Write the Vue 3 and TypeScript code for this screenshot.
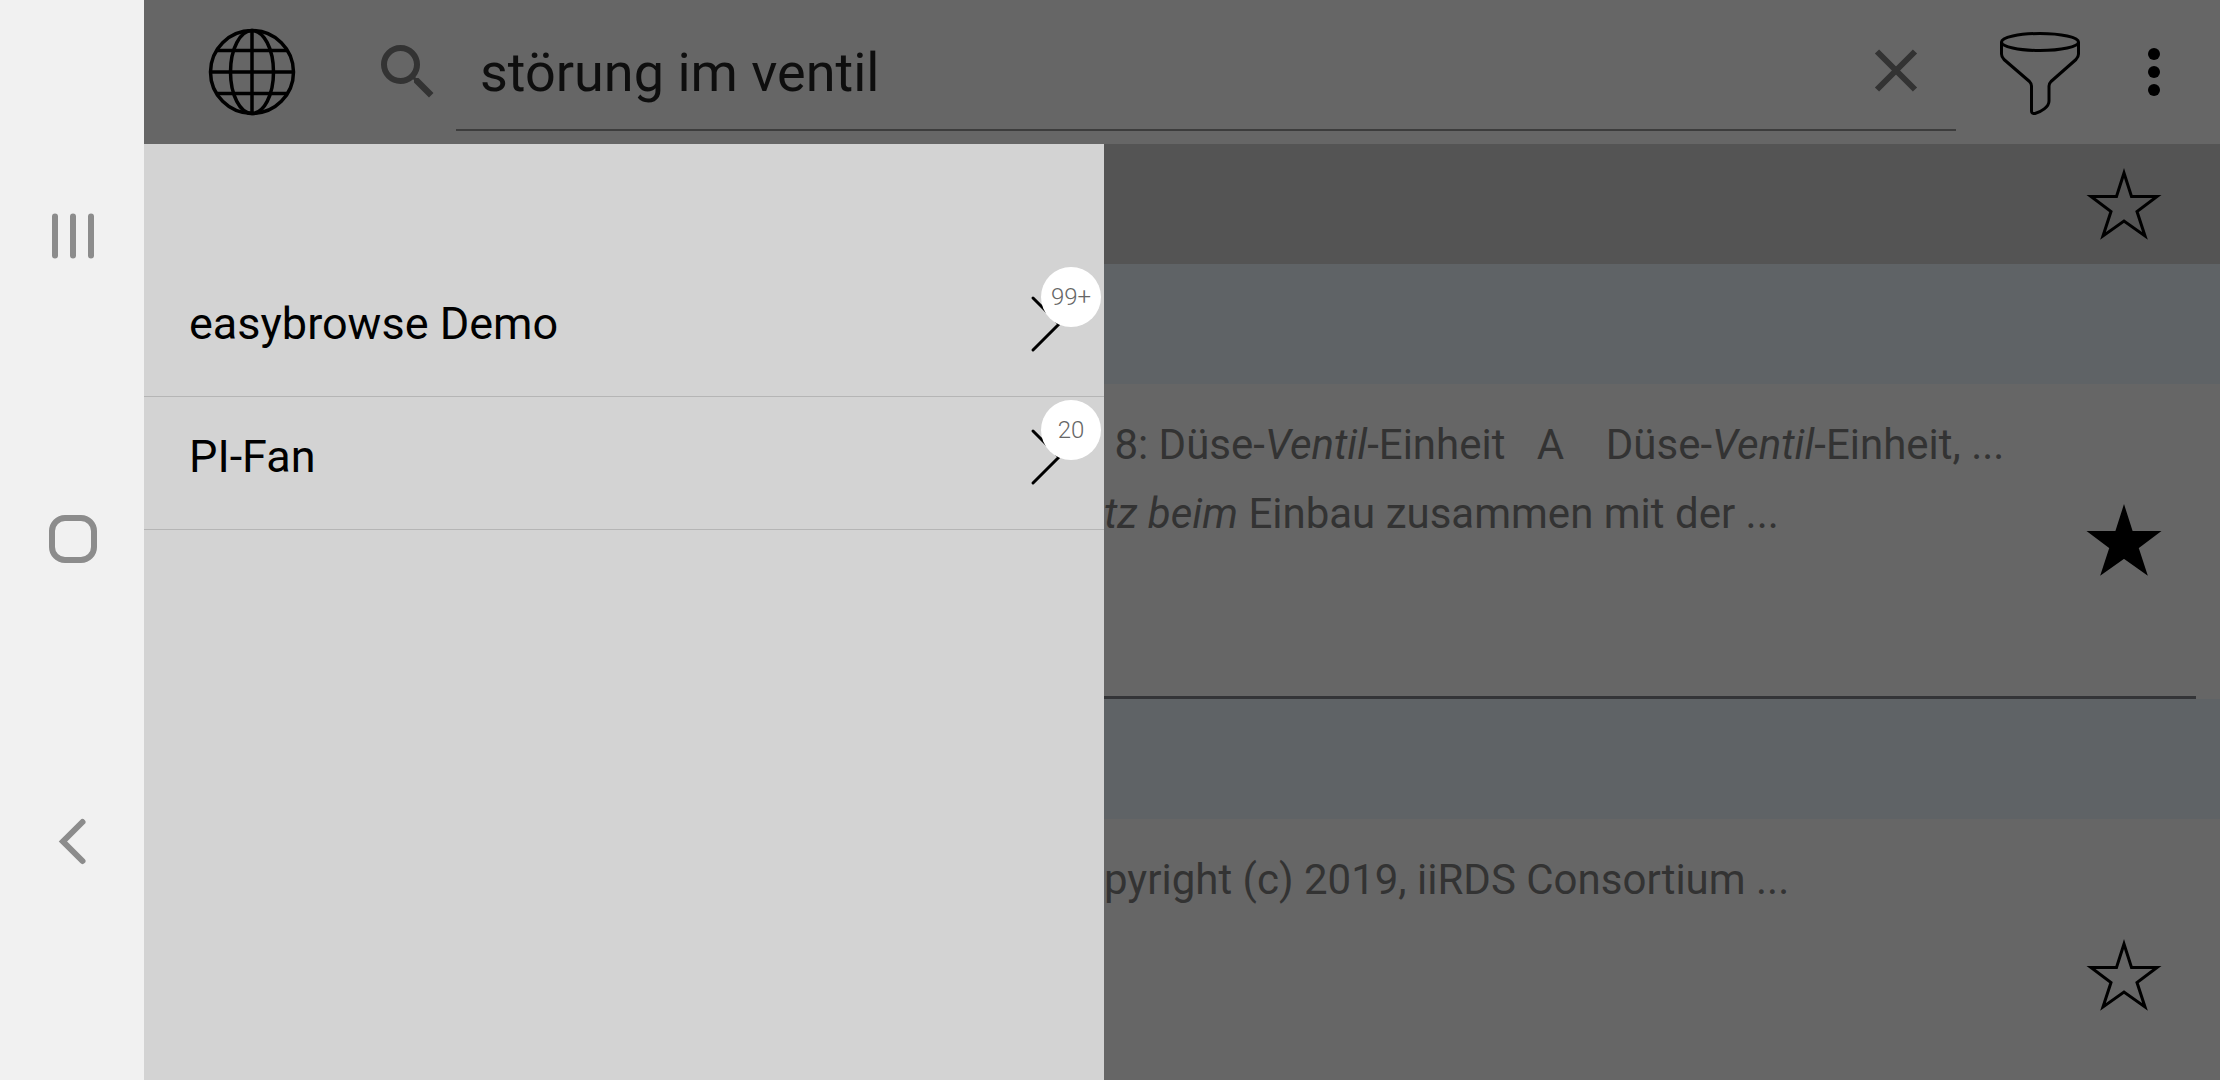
<script setup lang="ts">
import { ref } from 'vue'

interface Run {
  text: string
  em?: boolean
}

interface Result {
  id: number
  starred: boolean
  lines: Run[][]
}

interface Source {
  name: string
  badge: string
}

const query = ref('störung im ventil')

const sources: Source[] = [
  { name: 'easybrowse Demo', badge: '99+' },
  { name: 'PI-Fan', badge: '20' },
]

const results = ref<Result[]>([
  {
    id: 1,
    starred: true,
    lines: [
      [
        { text: ' 8: Düse-' },
        { text: 'Ventil', em: true },
        { text: '-Einheit   A    Düse-' },
        { text: 'Ventil', em: true },
        { text: '-Einheit, ...' },
      ],
      [{ text: 'tz beim', em: true }, { text: ' Einbau zusammen mit der ...' }],
    ],
  },
  {
    id: 2,
    starred: false,
    lines: [[{ text: 'pyright (c) 2019, iiRDS Consortium ...' }]],
  },
])

const star =
  'M40 9 47.500 32.500H73L53 47.500 61 72 40 57 19 72 27 47.500 7 32.500H32.500Z'
</script>

<template>
  <div class="screen">
    <nav class="system-nav" aria-label="System">
      <button type="button" aria-label="Recent apps">
        <svg viewBox="0 0 72 72" stroke-width="6" stroke-linecap="round">
          <path d="M19 16.500V55.500M37 16.500V55.500M55 16.500V55.500" />
        </svg>
      </button>
      <button type="button" aria-label="Home">
        <svg viewBox="0 0 72 72" stroke-width="6">
          <rect x="16" y="15" width="42" height="42" rx="13" />
        </svg>
      </button>
      <button type="button" aria-label="Back">
        <svg viewBox="0 0 72 72" stroke-width="6" stroke-linecap="round">
          <path d="M46.500 17 27 36.500 46.500 56" />
        </svg>
      </button>
    </nav>

    <div class="app">
      <header class="toolbar">
        <button type="button" class="icon-large" aria-label="Sources">
          <svg viewBox="0 0 96 96" stroke="#000" stroke-width="3.500">
            <circle cx="48" cy="48" r="41.500" />
            <ellipse cx="48" cy="48" rx="21.500" ry="41.500" />
            <path d="M48 6V90M6 48H90M13 26.500H83M13 69.500H83" />
          </svg>
        </button>
        <label class="search-label" for="query" aria-label="Search">
          <svg viewBox="0 0 24 24" fill="#333">
            <path
              d="M15.5 14h-.79l-.28-.27A6.471 6.471 0 0 0 16 9.500 6.500 6.500 0 1 0 9.500 16c1.610 0 3.090-.59 4.230-1.570l.27.280v.79l5 4.990L20.490 19l-4.990-5zm-6 0C7.010 14 5 11.990 5 9.500S7.010 5 9.500 5 14 7.010 14 9.500 11.990 14 9.500 14z"
            />
          </svg>
        </label>
        <div class="field">
          <input id="query" v-model="query" type="text" />
          <button type="button" class="icon" aria-label="Clear" @click="query = ''">
            <svg viewBox="0 0 72 72" stroke="#333" stroke-width="6">
              <path d="M17 15.500 55 53.500M55 15.500 17 53.500" />
            </svg>
          </button>
        </div>
        <button type="button" class="icon-large filter" aria-label="Filter">
          <svg viewBox="0 0 96 96" stroke="#000" stroke-width="3" stroke-linejoin="round">
            <ellipse cx="48" cy="18" rx="38.500" ry="8.500" />
            <path
              d="M9.500 18V30Q9.500 33 12 35.500L37.500 57.500Q39.500 59.500 39.500 62V87Q39.500 90 43 89.500C49 88 57 83 57 77V62Q57 59.500 59 57.500L84 35.500Q86.500 33 86.500 30V18"
            />
          </svg>
        </button>
        <button type="button" class="more" aria-label="More options">
          <svg viewBox="0 0 36 72" fill="#000">
            <circle cx="18" cy="18" r="6" />
            <circle cx="18" cy="36" r="6" />
            <circle cx="18" cy="54" r="6" />
          </svg>
        </button>
      </header>

      <div class="body">
        <main class="content">
          <div class="title-bar">
            <button type="button" class="star" aria-label="Add search to favourites">
              <svg viewBox="0 0 80 80" stroke="#000" stroke-width="3"><path :d="star" /></svg>
            </button>
          </div>
          <article v-for="result in results" :key="result.id" class="result">
            <div class="result-head"></div>
            <div class="result-body">
              <div class="excerpt">
                <p v-for="(line, i) in result.lines" :key="i">
                  <template v-for="(run, j) in line" :key="j"
                    ><em v-if="run.em">{{ run.text }}</em
                    ><span v-else>{{ run.text }}</span></template
                  >
                </p>
              </div>
              <button
                type="button"
                class="star"
                :aria-label="result.starred ? 'Remove favourite' : 'Add favourite'"
                :aria-pressed="result.starred"
                @click="result.starred = !result.starred"
              >
                <svg viewBox="0 0 80 80" stroke="#000" stroke-width="3">
                  <path :d="star" :fill="result.starred ? '#000' : 'none'" />
                </svg>
              </button>
            </div>
          </article>
        </main>

        <aside class="drawer">
          <ul>
            <li v-for="source in sources" :key="source.name">
              <button type="button" class="source">
                <span class="name">{{ source.name }}</span>
                <span class="count">
                  <svg viewBox="0 0 72 72" stroke="#000" stroke-width="3" stroke-linecap="round">
                    <path d="M4 11 30 37 4 63" />
                  </svg>
                  <span class="badge">{{ source.badge }}</span>
                </span>
              </button>
            </li>
          </ul>
        </aside>
      </div>
    </div>
  </div>
</template>

<style>
body {
  margin: 0;
  background: #666;
}
</style>

<style scoped>
.screen {
  display: flex;
  height: 100vh;
  overflow: hidden;
  font-family: Roboto, 'Liberation Sans', sans-serif;
}

button {
  display: block;
  flex: none;
  margin: 0;
  padding: 0;
  border: 0;
  background: none;
  color: inherit;
  font: inherit;
  cursor: pointer;
}

svg {
  display: block;
  width: 100%;
  height: 100%;
}

svg:not([fill]) {
  fill: none;
}

.system-nav {
  display: flex;
  flex: none;
  flex-direction: column;
  align-items: center;
  justify-content: space-between;
  box-sizing: border-box;
  width: 144px;
  padding: 200px 0 203px;
  background: #f1f1f1;
}

.system-nav button {
  width: 72px;
  height: 72px;
}

.system-nav svg {
  stroke: #8c8c8c;
}

.app {
  display: flex;
  flex: 1;
  flex-direction: column;
  min-width: 0;
  background: #666;
}

.toolbar {
  display: flex;
  flex: none;
  align-items: center;
  box-sizing: border-box;
  height: 144px;
  padding: 0 48px 0 60px;
}

.icon-large {
  width: 96px;
  height: 96px;
}

.icon,
.search-label {
  flex: none;
  width: 72px;
  height: 72px;
}

.search-label {
  margin: 0 12px 0 72px;
}

.field {
  display: flex;
  flex: 1;
  align-items: center;
  box-sizing: border-box;
  min-width: 0;
  height: 118px;
  padding: 0 24px;
  border-top: 2px solid transparent;
  border-bottom: 2px solid #3c3c3c;
}

.field input {
  flex: 1;
  min-width: 0;
  height: 72px;
  padding: 0;
  border: 0;
  outline: 0;
  background: none;
  color: #0e0e0e;
  font: inherit;
  font-size: 54px;
}

.filter {
  margin: 0 48px 0 36px;
}

.more {
  width: 36px;
  height: 72px;
}

.body {
  position: relative;
  flex: 1;
  min-height: 0;
}

.content {
  height: 100%;
  overflow: hidden;
}

.title-bar {
  display: flex;
  align-items: center;
  justify-content: flex-end;
  box-sizing: border-box;
  height: 120px;
  padding-right: 56px;
  background: #545454;
}

.star {
  width: 80px;
  height: 80px;
}

.result-head {
  height: 120px;
  background: #5f6366;
}

.result-body {
  display: flex;
  align-items: center;
  box-sizing: border-box;
  min-height: 315px;
  margin-right: 24px;
  padding: 0 32px 0 960px;
  border-bottom: 3px solid #333437;
}

.excerpt {
  flex: 1;
  align-self: flex-start;
  min-width: 0;
  padding-top: 26px;
  color: #333;
  font-size: 42px;
  line-height: 69px;
  white-space: pre;
}

.excerpt p {
  margin: 0;
}

.drawer {
  position: absolute;
  top: 0;
  bottom: 0;
  left: 0;
  box-sizing: border-box;
  width: 960px;
  padding-top: 120px;
  background: #d3d3d3;
  color: #000;
}

.drawer ul {
  margin: 0;
  padding: 0;
  list-style: none;
}

.drawer li {
  border-bottom: 1px solid #b5b5b5;
}

.source {
  display: flex;
  align-items: center;
  justify-content: space-between;
  box-sizing: border-box;
  width: 100%;
  height: 132px;
  padding: 0 3px 14px 45px;
  font-size: 45px;
  text-align: left;
}

.count {
  position: relative;
  width: 72px;
  height: 72px;
}

.badge {
  position: absolute;
  top: -20px;
  right: 0;
  width: 60px;
  height: 60px;
  border-radius: 50%;
  background: #fff;
  color: #666;
  font-size: 24px;
  font-weight: 300;
  line-height: 60px;
  text-align: center;
}
</style>
